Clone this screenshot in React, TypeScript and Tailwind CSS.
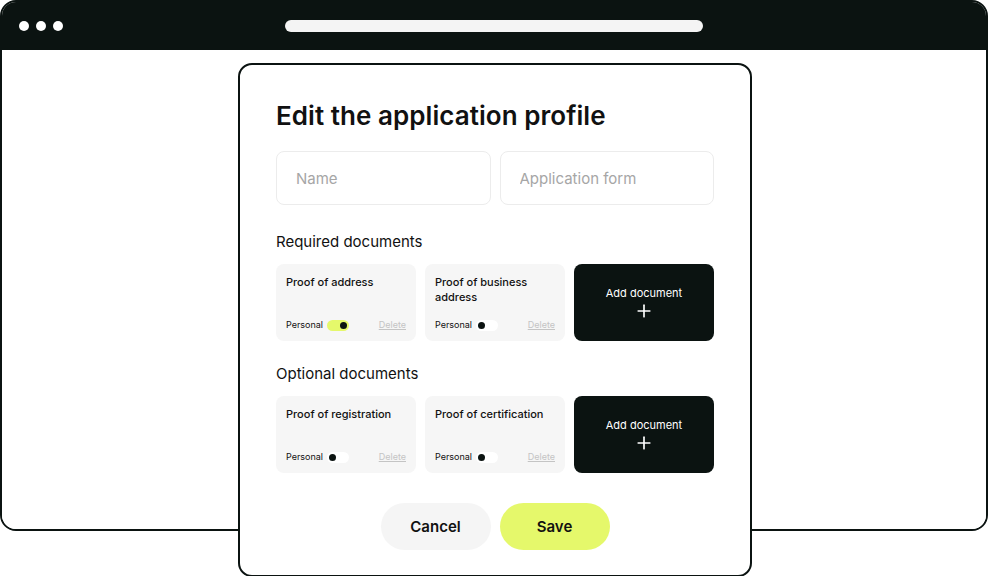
import { Plus } from "lucide-react";

type Doc = { title: string; on?: boolean };

const REQUIRED: Doc[] = [
  { title: "Proof of address", on: true },
  { title: "Proof of business address" },
];
const OPTIONAL: Doc[] = [{ title: "Proof of registration" }, { title: "Proof of certification" }];

function Toggle({ on }: { on?: boolean }) {
  return (
    <span
      className={
        "ml-[4px] flex h-[11px] w-[22px] items-center rounded-full px-[2px] " +
        (on ? "justify-end bg-[#e5f86b]" : "justify-start bg-white")
      }
    >
      <span className="h-[7px] w-[7px] rounded-full bg-[#0b1311]" />
    </span>
  );
}

function DocCard({ doc }: { doc: Doc }) {
  return (
    <div className="flex h-[77px] flex-col justify-between rounded-[8px] bg-[#f6f6f6] px-[10px] pt-[11px] pb-[10px]">
      <p className="text-[11px] leading-[15px] font-medium text-[#111]">{doc.title}</p>
      <div className="flex items-center text-[9px] leading-[12px]">
        <span className="text-[#111]">Personal</span>
        <Toggle on={doc.on} />
        <span className="ml-auto text-[#c4c4c4] underline">Delete</span>
      </div>
    </div>
  );
}

function Section({ title, docs }: { title: string; docs: Doc[] }) {
  return (
    <div>
      <h3 className="text-[15px] leading-[20px] text-[#111]">{title}</h3>
      <div className="mt-[12px] grid grid-cols-3 gap-[9px]">
        {docs.map((d) => (
          <DocCard key={d.title} doc={d} />
        ))}
        <button className="flex h-[77px] flex-col items-center justify-center rounded-[8px] bg-[#0b1311] pt-[2px] text-white">
          <span className="text-[11px] leading-[15px]">Add document</span>
          <Plus size={20} strokeWidth={2} />
        </button>
      </div>
    </div>
  );
}

export default function App() {
  return (
    <div
      className="relative h-[576px] w-[988px] overflow-hidden bg-white"
      style={{ fontFamily: "Inter, 'Noto Sans', sans-serif" }}
    >
      {/* browser window behind the dialog */}
      <div className="flex h-[531px] w-[988px] flex-col overflow-hidden rounded-[16px] border-2 border-[#0b1311]">
        <div className="grid h-[48px] grid-cols-[1fr_418px_1fr] items-center bg-[#0b1311]">
          <div className="flex gap-[7px] pl-[17px]">
            <span className="h-[10px] w-[10px] rounded-full bg-white" />
            <span className="h-[10px] w-[10px] rounded-full bg-white" />
            <span className="h-[10px] w-[10px] rounded-full bg-white" />
          </div>
          <div className="h-[12px] rounded-full bg-[#f4f4f4]" />
          <div />
        </div>
        <div className="flex-1 bg-white" />
      </div>

      {/* dialog */}
      <div className="absolute top-[63px] left-[238px] h-[514px] w-[514px] rounded-[14px] border-2 border-[#0b1311] bg-white px-[36px] pt-[35px]">
        <h1 className="text-[26px] leading-[32px] font-semibold tracking-[0.05px] text-[#111]">
          Edit the application profile
        </h1>

        <div className="mt-[19px] grid grid-cols-2 gap-[9px]">
          <input
            placeholder="Name"
            className="h-[54px] rounded-[8px] border-[1.5px] border-[#ececec] px-[19px] text-[15px] placeholder:text-[#a6a6a6] outline-none"
          />
          <input
            placeholder="Application form"
            className="h-[54px] rounded-[8px] border-[1.5px] border-[#ececec] px-[19px] text-[15px] placeholder:text-[#a6a6a6] outline-none"
          />
        </div>

        <div className="mt-[27px]">
          <Section title="Required documents" docs={REQUIRED} />
        </div>
        <div className="mt-[23px]">
          <Section title="Optional documents" docs={OPTIONAL} />
        </div>

        <div className="mt-[30px] flex justify-center gap-[9px]">
          <button className="h-[47px] w-[110px] rounded-full bg-[#f5f5f5] pt-[2px] text-[15px] font-semibold text-[#111]">
            Cancel
          </button>
          <button className="h-[47px] w-[110px] rounded-full bg-[#e5f86b] pt-[2px] text-[15px] font-semibold text-[#111]">
            Save
          </button>
        </div>
      </div>
    </div>
  );
}
